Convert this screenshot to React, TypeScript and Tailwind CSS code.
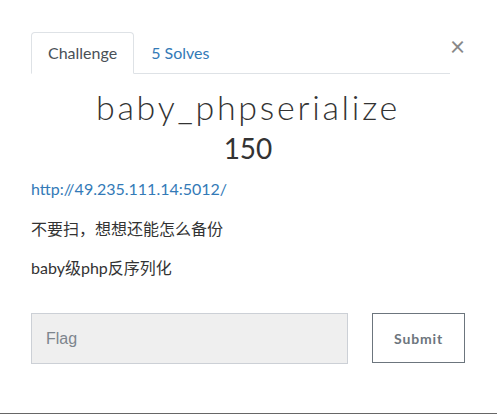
export default function App() {
  return (
    <div className="relative h-[414px] w-[497px] overflow-hidden border-b border-[#666] bg-white font-['Lato','Noto_Sans_CJK_SC',sans-serif] text-[#212529]">
      <div className="pl-[31px] pr-[32px] pt-[32px]">
        <div className="flex items-start">
          <div className="flex h-[42px] w-[420px] border-b border-[#dee2e6]">
            <div className="flex h-[42px] items-center rounded-t border border-b-white border-[#dee2e6] bg-white px-[16px] text-[16px] text-[#495057]">Challenge</div>
            <div className="flex h-[41px] items-center px-[17px] text-[16px] text-[#337ab7]">5 Solves</div>
          </div>
          <button className="ml-auto mt-[1px] text-[26px] font-normal leading-none text-[#888]">×</button>
        </div>
        <h1 className="mt-[11px] text-center text-[34px] font-light leading-[44px] tracking-[0.08em] text-[#333]">baby_phpserialize</h1>
        <div className="mt-[1px] text-center text-[28px] leading-[36px] text-[#333]">150</div>
        <a className="mt-[11px] block text-[16px] leading-[24px] text-[#337ab7]">http://49.235.111.14:5012/</a>
        <p className="mt-[16px] text-[16px] leading-[24px] text-[#333]">不要扫，想想还能怎么备份</p>
        <p className="mt-[15px] text-[16px] leading-[24px] text-[#333]">baby级php反序列化</p>
        <div className="mt-[33px] flex items-start">
          <input className="h-[51px] w-[317px] border border-[#ccd0d6] bg-[#efefef] px-[14px] font-['Liberation_Sans',sans-serif] text-[16px] placeholder:text-[#7d858d]" placeholder="Flag" />
          <button className="ml-auto h-[50px] w-[93px] border border-[#6c757d] bg-white text-[14px] font-bold tracking-[0.06em] text-[#6c757d]">Submit</button>
        </div>
      </div>
    </div>
  );
}
